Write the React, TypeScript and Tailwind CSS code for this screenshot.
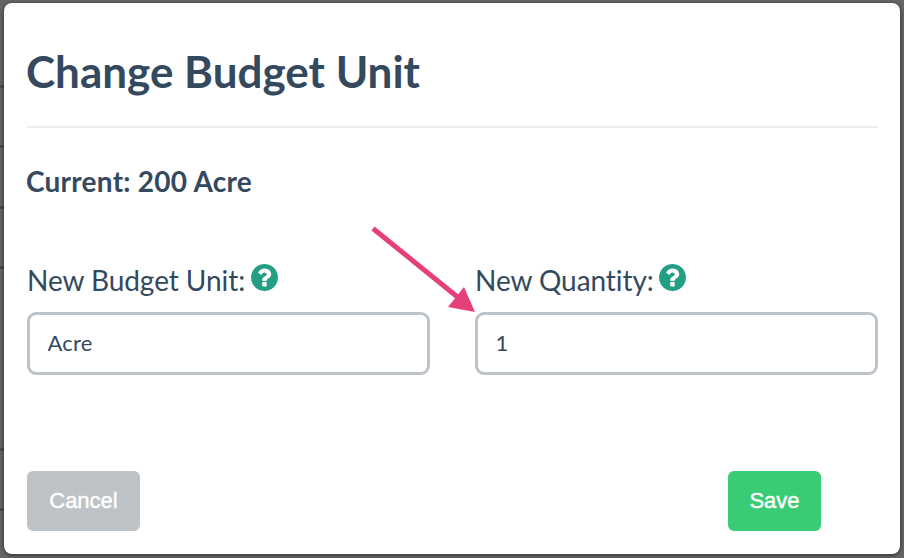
import React from "react";

function HelpIcon() {
  return (
    <svg width="27" height="27" viewBox="128 128 1536 1536" className="mb-[5px] shrink-0">
      <path
        fill="#229f85"
        d="M1024 1376v-192q0-14-9-23t-23-9h-192q-14 0-23 9t-9 23v192q0 14 9 23t23 9h192q14 0 23-9t9-23zm256-672q0-88-55.500-163t-138.500-116-170-41q-243 0-371 213-15 24 8 42l132 100q7 6 19 6 16 0 25-12 53-68 86-92 34-24 86-24 48 0 85.500 26t37.500 59q0 38-20 61t-68 45q-63 28-115.500 86.500t-52.500 125.500v36q0 14 9 23t23 9h192q14 0 23-9t9-23q0-19 21.500-49.500t54.500-49.500q32-18 49-28.500t46-35 44.500-48 28-60.500 12.500-81zm384 192q0 209-103 385.500t-279.500 279.500-385.500 103-385.500-103-279.500-279.500-103-385.500 103-385.500 279.500-279.500 385.500-103 385.500 103 279.500 279.500 103 385.500z"
      />
    </svg>
  );
}

function Field({ label, value }: { label: string; value: string }) {
  return (
    <label className="block w-[403px] shrink-0">
      <span className="flex h-[36px] items-center gap-[5.5px] text-[28px] leading-[36px] tracking-[-0.06px] [font-variant-ligatures:none]">
        <span>{label}</span>
        <HelpIcon />
      </span>
      <input
        defaultValue={value}
        className="mt-[14px] block h-[63px] w-full rounded-[9px] border-3 border-[#bdc3c7] bg-white pr-[18px] pb-[2px] pl-[17.500px] text-[22px] tracking-[0.2px] outline-none"
      />
    </label>
  );
}

export default function App() {
  return (
    <div className="h-[558px] w-[904px] bg-[#666563] bg-[linear-gradient(#4a4947,#4a4947),linear-gradient(#4a4947,#4a4947),linear-gradient(#4a4947,#4a4947),linear-gradient(#4a4947,#4a4947),linear-gradient(#4a4947,#4a4947),linear-gradient(#4a4947,#4a4947)] bg-[length:4px_3px] bg-[position:0_85px,0_145px,0_206px,0_266px,0_448px,0_508px] bg-no-repeat px-[4px] pt-[3px] font-['Lato',sans-serif] text-[#34495e]">
      <main className="relative h-[551px] w-[896px] rounded-[8px] bg-white pt-[41px] pr-[22px] pl-[23px] shadow-[0_1px_4px_rgba(0,0,0,0.55)]">
        <h1 className="h-[84px] border-b-2 border-[#eee] text-[44px] font-bold leading-[54px]">
          <span className="-ml-px">Change Budget Unit</span>
        </h1>
        <h2 className="mt-[35px] -ml-px text-[28px] font-bold leading-[36px] tracking-[0.25px]">Current: 200 Acre</h2>
        <div className="mt-[63px] flex gap-[45px]">
          <Field label="New Budget Unit:" value="Acre" />
          <Field label="New Quantity:" value="1" />
        </div>
        <div className="mt-[96px] flex justify-between pr-[57px] font-['Liberation_Sans',sans-serif] text-[22px] text-white [-webkit-text-stroke:0.4px_white]">
          <button className="h-[60px] w-[113px] rounded-[6px] bg-[#bdc3c7] pb-[2px]">Cancel</button>
          <button className="h-[60px] w-[93px] rounded-[6px] bg-[#3acc74] pb-[2px]">Save</button>
        </div>
        <svg className="absolute left-[364px] top-[217px]" width="115" height="100" viewBox="0 0 115 100">
          <path d="M5 8.500L92 79" stroke="#e6407c" strokeWidth="5" />
          <path d="M107 92L80 87L96 67Z" fill="#e6407c" />
        </svg>
      </main>
    </div>
  );
}
